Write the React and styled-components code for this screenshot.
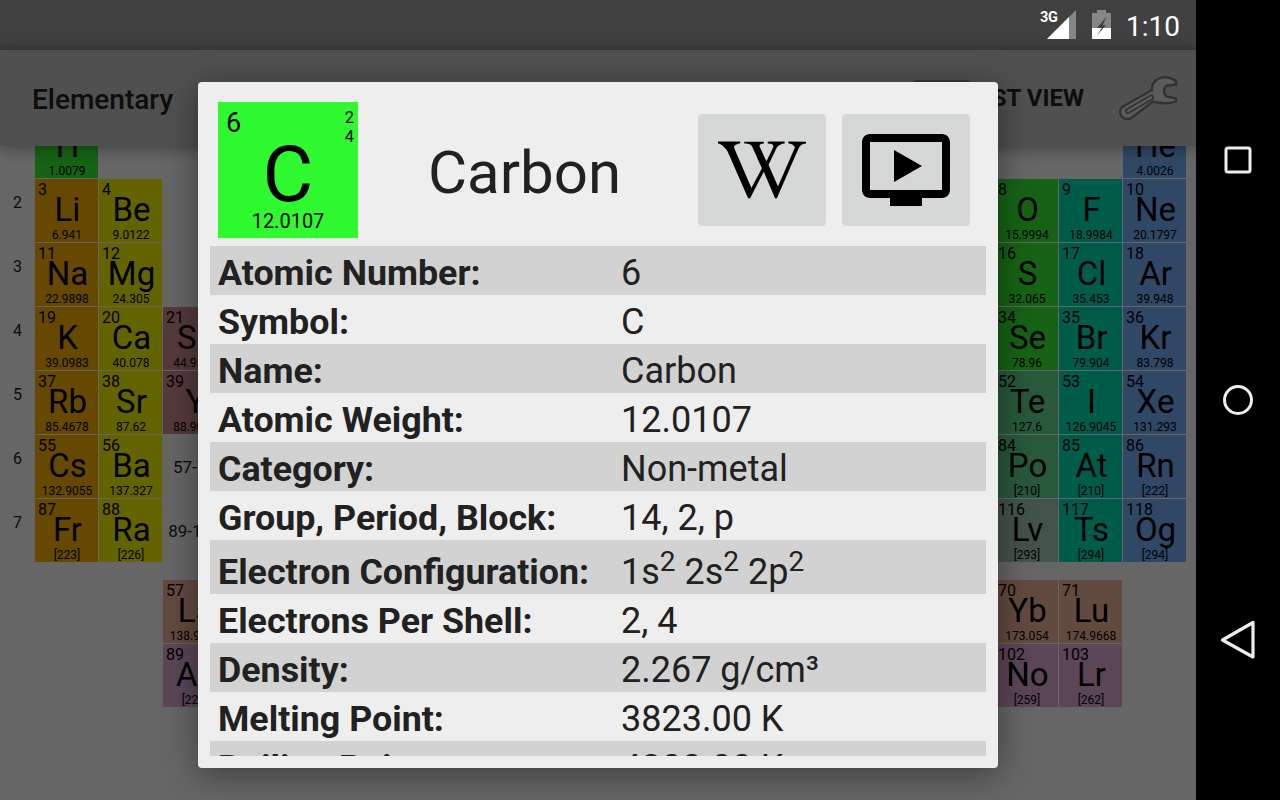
import React from "react";
import styled, { createGlobalStyle } from "styled-components";
import { FaWikipediaW } from "react-icons/fa";

const Global = createGlobalStyle`
  html, body { margin: 0; padding: 0; background: #000; }
  body { font-family: Roboto, "Noto Sans", sans-serif; color: #000; overflow: hidden; }
`;

const COLORS = {
  alkali: "#ffb400",
  alkaline: "#f8f800",
  transition: "#d49196",
  lanthanide: "#f7ba9e",
  actinide: "#e1afd9",
  nonmetal: "#37f836",
  metalloid: "#62de91",
  unknown: "#aad0ba",
  halogen: "#00e6b9",
  noble: "#78b2ff",
};

const ELEMENTS = [
  [1, 0, 1, "H", "1.0079", "nonmetal"], [1, 17, 2, "He", "4.0026", "noble"],
  [2, 0, 3, "Li", "6.941", "alkali"], [2, 1, 4, "Be", "9.0122", "alkaline"],
  [2, 15, 8, "O", "15.9994", "nonmetal"], [2, 16, 9, "F", "18.9984", "halogen"], [2, 17, 10, "Ne", "20.1797", "noble"],
  [3, 0, 11, "Na", "22.9898", "alkali"], [3, 1, 12, "Mg", "24.305", "alkaline"],
  [3, 15, 16, "S", "32.065", "nonmetal"], [3, 16, 17, "Cl", "35.453", "halogen"], [3, 17, 18, "Ar", "39.948", "noble"],
  [4, 0, 19, "K", "39.0983", "alkali"], [4, 1, 20, "Ca", "40.078", "alkaline"], [4, 2, 21, "Sc", "44.9559", "transition"],
  [4, 15, 34, "Se", "78.96", "nonmetal"], [4, 16, 35, "Br", "79.904", "halogen"], [4, 17, 36, "Kr", "83.798", "noble"],
  [5, 0, 37, "Rb", "85.4678", "alkali"], [5, 1, 38, "Sr", "87.62", "alkaline"], [5, 2, 39, "Y", "88.9059", "transition"],
  [5, 15, 52, "Te", "127.6", "metalloid"], [5, 16, 53, "I", "126.9045", "halogen"], [5, 17, 54, "Xe", "131.293", "noble"],
  [6, 0, 55, "Cs", "132.9055", "alkali"], [6, 1, 56, "Ba", "137.327", "alkaline"],
  [6, 15, 84, "Po", "[210]", "metalloid"], [6, 16, 85, "At", "[210]", "halogen"], [6, 17, 86, "Rn", "[222]", "noble"],
  [7, 0, 87, "Fr", "[223]", "alkali"], [7, 1, 88, "Ra", "[226]", "alkaline"],
  [7, 15, 116, "Lv", "[293]", "unknown"], [7, 16, 117, "Ts", "[294]", "halogen"], [7, 17, 118, "Og", "[294]", "noble"],
  [9, 2, 57, "La", "138.9055", "lanthanide"], [9, 15, 70, "Yb", "173.054", "lanthanide"], [9, 16, 71, "Lu", "174.9668", "lanthanide"],
  [10, 2, 89, "Ac", "[227]", "actinide"], [10, 15, 102, "No", "[259]", "actinide"], [10, 16, 103, "Lr", "[262]", "actinide"],
];

const PROPERTIES = [
  ["Atomic Number:", "6"],
  ["Symbol:", "C"],
  ["Name:", "Carbon"],
  ["Atomic Weight:", "12.0107"],
  ["Category:", "Non-metal"],
  ["Group, Period, Block:", "14, 2, p"],
  ["Electron Configuration:", <>1s<sup>2</sup> 2s<sup>2</sup> 2p<sup>2</sup></>, true],
  ["Electrons Per Shell:", "2, 4"],
  ["Density:", "2.267 g/cm³"],
  ["Melting Point:", "3823.00 K"],
  ["Boiling Point:", "4300.00 K"],
];

const Screen = styled.div`
  display: flex;
  width: 1280px;
  height: 800px;
  overflow: hidden;
`;
const Device = styled.div`
  display: flex;
  flex-direction: column;
  width: 1196px;
  height: 800px;
  background: #fff;
`;
const StatusBar = styled.header`
  flex: 0 0 50px;
  display: flex;
  align-items: center;
  justify-content: flex-end;
  padding-right: 16px;
  box-sizing: border-box;
  background: linear-gradient(#404040 88%, #3b3b3b);
  color: #fff;
`;
const SignalBox = styled.div`
  position: relative;
  width: 36px;
  height: 30px;
`;
const NetworkType = styled.span`
  position: absolute;
  left: 0;
  top: 1px;
  font-size: 14.5px;
  line-height: 14px;
  font-weight: 700;
  letter-spacing: -0.4px;
`;
const SignalSvg = styled.svg`
  position: absolute;
  right: 0;
  bottom: 1px;
`;
const BatterySvg = styled.svg`
  margin: 0 15px 1px 16px;
`;
const Clock = styled.span`
  font-size: 28px;
  line-height: 28px;
  width: 54px;
  margin-top: 3px;
  white-space: nowrap;
`;
const Stage = styled.div`
  position: relative;
  flex: 1;
  display: flex;
  flex-direction: column;
  min-height: 0;
`;
const AppBar = styled.div`
  position: relative;
  z-index: 1;
  flex: 0 0 96px;
  display: flex;
  align-items: center;
  box-sizing: border-box;
  padding: 0 18px 0 32px;
  background: #c9c9c9;
  box-shadow: 0 3px 14px rgba(0, 0, 0, 0.35);
`;
const AppTitle = styled.h1`
  margin: 2px 0 0;
  flex: 1;
  font-size: 28px;
  font-weight: 500;
  color: #212121;
`;
const ListIcon = styled.div`
  width: 58px;
  height: 36px;
  border-radius: 4px;
  background: #8c8c8c;
`;
const ListAction = styled.div`
  display: flex;
  align-items: center;
  margin-right: 34px;
  font-size: 24px;
  font-weight: 700;
  color: #212121;
  span { margin-left: 1px; }
`;
const Content = styled.main`
  flex: 1;
  overflow: hidden;
`;
const Table = styled.div`
  display: grid;
  margin-top: -31px;
  grid-template-columns: 34px repeat(18, 63px);
  grid-template-rows: repeat(7, 63px) 16px repeat(2, 63px);
  gap: 1px;
`;
const PeriodLabel = styled.div`
  grid-column: 1;
  grid-row: ${(p) => p.$row};
  font-size: 16px;
  line-height: 20px;
  padding-top: 14px;
  padding-left: 13px;
  color: #212121;
`;
const Cell = styled.div`
  grid-column: ${(p) => p.$col + 2};
  grid-row: ${(p) => p.$row};
  display: flex;
  flex-direction: column;
  background: ${(p) => COLORS[p.$kind]};
  overflow: hidden;
`;
const CellNumber = styled.span`
  font-size: 16px;
  line-height: 16px;
  margin: 3px 0 0 3px;
`;
const CellSymbol = styled.span`
  font-size: 33px;
  line-height: 26px;
  margin-top: -1px;
  padding-left: 2px;
  text-align: center;
  white-space: nowrap;
`;
const CellWeight = styled.span`
  font-size: 12px;
  line-height: 14px;
  margin-top: 5px;
  padding-left: 1px;
  text-align: center;
  white-space: nowrap;
`;
const RangeLabel = styled.div`
  grid-column: ${(p) => p.$col + 2};
  grid-row: ${(p) => p.$row};
  display: flex;
  align-items: center;
  justify-content: center;
  font-size: 17px;
  color: #212121;
`;
const Scrim = styled.div`
  position: absolute;
  inset: 0;
  z-index: 2;
  display: flex;
  justify-content: center;
  align-items: center;
  background: rgba(0, 0, 0, 0.6);
`;
const Dialog = styled.section`
  width: 800px;
  height: 686px;
  border-radius: 4px;
  background: #eee;
  box-shadow: 0 6px 34px rgba(0, 0, 0, 0.42);
  color: #212121;
  overflow: hidden;
`;
const DialogHeader = styled.div`
  display: flex;
  align-items: center;
  height: 136px;
  margin-top: 20px;
  padding: 0 28px 0 20px;
`;
const Tile = styled.div`
  position: relative;
  flex: 0 0 140px;
  height: 136px;
  display: flex;
  flex-direction: column;
  align-items: center;
  background: #2ff92f;
  color: #000;
`;
const TileNumber = styled.span`
  position: absolute;
  left: 8px;
  top: 5px;
  font-size: 27px;
  line-height: 32px;
`;
const TileShells = styled.span`
  position: absolute;
  right: 4px;
  top: 6px;
  font-size: 16.5px;
  line-height: 19px;
  text-align: right;
`;
const TileSymbol = styled.span`
  margin-top: 33px;
  font-size: 78px;
  line-height: 80px;
`;
const TileWeight = styled.span`
  margin-top: -5px;
  font-size: 20px;
  line-height: 22px;
`;
const DialogTitle = styled.h2`
  flex: 1;
  margin: 6px 0 0 70px;
  font-size: 60px;
  font-weight: 400;
  line-height: 70px;
  color: #212121;
`;
const IconButton = styled.button`
  display: flex;
  align-items: center;
  justify-content: center;
  width: 128px;
  height: 112px;
  margin-left: ${(p) => (p.$first ? 0 : "16px")};
  padding: 0;
  border: 0;
  border-radius: 4px;
  background: #d6d8d7;
  color: #000;
`;
const PropertyList = styled.div`
  height: 510px;
  margin: 8px 12px 0;
  overflow: hidden;
`;
const PropertyRow = styled.div`
  display: grid;
  grid-template-columns: 403px 1fr;
  box-sizing: border-box;
  height: ${(p) => (p.$tall ? 54 : 49)}px;
  padding: ${(p) => (p.$tall ? 8 : 3)}px 8px 0;
  background: ${(p) => (p.$shaded ? "#d2d2d2" : "transparent")};
  font-size: 36px;
  line-height: 49px;
  white-space: nowrap;
  sup {
    font-size: 28px;
    line-height: 0;
    vertical-align: 13px;
  }
`;
const PropertyName = styled.span`
  font-weight: 700;
  font-size: 35.8px;
`;
const PropertyValue = styled.span``;
const NavBar = styled.nav`
  flex: 0 0 84px;
  display: flex;
  flex-direction: column;
  align-items: center;
  box-sizing: border-box;
  height: 800px;
  padding-top: 146px;
  background: #000;
`;
const NavIcon = styled.svg`
  margin-top: ${(p) => p.$gap}px;
`;

function ElementCell({ row, col, number, symbol, weight, kind }) {
  return (
    <Cell $row={row} $col={col} $kind={kind}>
      <CellNumber>{number}</CellNumber>
      <CellSymbol>{symbol}</CellSymbol>
      <CellWeight>{weight}</CellWeight>
    </Cell>
  );
}

function Wrench() {
  return (
    <svg width="60" height="44" viewBox="0 0 60 44" fill="none">
      <path
        d="M58 5C54 1.5 46 0 41 2.5C36 5 33.5 9.5 34 14L5 30.5C1.5 33 1 37 4 40.5C7 43.5 11 43.5 14 41.5L35 25.5C41 27.5 52 28 58 25.5L58 22.5L49 20.5C45.5 18.5 44.5 12.5 49 9.5L58 8.5Z"
        fill="#e4e4e4"
        stroke="#7d7d7d"
        strokeWidth="2.4"
        strokeLinejoin="round"
      />
      <line x1="10" y1="35" x2="33" y2="21.5" stroke="#7d7d7d" strokeWidth="6" strokeLinecap="round" />
      <line x1="10" y1="35" x2="33" y2="21.5" stroke="#e4e4e4" strokeWidth="2.6" strokeLinecap="round" />
    </svg>
  );
}

export default function App() {
  return (
    <Screen>
      <Global />
      <Device>
        <StatusBar>
          <SignalBox>
            <NetworkType>3G</NetworkType>
            <SignalSvg width="29" height="29" viewBox="0 0 29 29">
              <polygon points="0,29 29,0 29,29" fill="#868686" />
              <polygon points="0,29 22,7 22,29" fill="#fff" />
            </SignalSvg>
          </SignalBox>
          <BatterySvg width="19" height="29" viewBox="0 0 19 29">
            <path d="M5 0H14V3H19V29H0V3H5Z" fill="#868686" />
            <rect x="0" y="18" width="19" height="11" fill="#fff" />
            <polygon points="14.7,6.7 4.7,18 9.7,18 4.7,25.7 14,15 10.7,15" fill="#404040" />
          </BatterySvg>
          <Clock>1:10</Clock>
        </StatusBar>
        <Stage>
          <AppBar>
            <AppTitle>Elementary</AppTitle>
            <ListAction>
              <ListIcon />
              <span>LIST VIEW</span>
            </ListAction>
            <Wrench />
          </AppBar>
          <Content>
            <Table>
              {[1, 2, 3, 4, 5, 6, 7].map((n) => (
                <PeriodLabel key={n} $row={n}>{n}</PeriodLabel>
              ))}
              {ELEMENTS.map(([row, col, number, symbol, weight, kind]) => (
                <ElementCell key={number} row={row} col={col} number={number} symbol={symbol} weight={weight} kind={kind} />
              ))}
              <RangeLabel $row={6} $col={2}>57-71</RangeLabel>
              <RangeLabel $row={7} $col={2}>89-103</RangeLabel>
            </Table>
          </Content>
          <Scrim>
            <Dialog>
              <DialogHeader>
                <Tile>
                  <TileNumber>6</TileNumber>
                  <TileShells>2<br />4</TileShells>
                  <TileSymbol>C</TileSymbol>
                  <TileWeight>12.0107</TileWeight>
                </Tile>
                <DialogTitle>Carbon</DialogTitle>
                <IconButton $first aria-label="Wikipedia">
                  <FaWikipediaW size={88} />
                </IconButton>
                <IconButton aria-label="Video">
                  <svg width="96" height="96" viewBox="0 0 24 24" fill="currentColor">
                    <path d="M21 3H3c-1.11 0-2 .89-2 2v12c0 1.1.89 2 2 2h5v2h8v-2h5c1.1 0 1.99-.9 1.99-2L23 5c0-1.11-.9-2-2-2zm0 14H3V5h18v12zm-5-6l-7 4V7z" />
                  </svg>
                </IconButton>
              </DialogHeader>
              <PropertyList>
                {PROPERTIES.map(([name, value, tall], i) => (
                  <PropertyRow key={name} $shaded={i % 2 === 0} $tall={tall}>
                    <PropertyName>{name}</PropertyName>
                    <PropertyValue>{value}</PropertyValue>
                  </PropertyRow>
                ))}
              </PropertyList>
            </Dialog>
          </Scrim>
        </Stage>
      </Device>
      <NavBar>
        <NavIcon $gap={0} width="28" height="28" viewBox="0 0 28 28" fill="none">
          <rect x="2" y="2" width="24" height="24" rx="2" stroke="#eee" strokeWidth="3" />
        </NavIcon>
        <NavIcon $gap={210} width="32" height="32" viewBox="0 0 32 32" fill="none">
          <circle cx="16" cy="16" r="13.5" stroke="#eee" strokeWidth="3" />
        </NavIcon>
        <NavIcon $gap={204} width="36" height="40" viewBox="0 0 36 40" fill="none">
          <polygon points="2.5,20 33,2.5 33,37" stroke="#eee" strokeWidth="3.2" strokeLinejoin="round" />
        </NavIcon>
      </NavBar>
    </Screen>
  );
}
